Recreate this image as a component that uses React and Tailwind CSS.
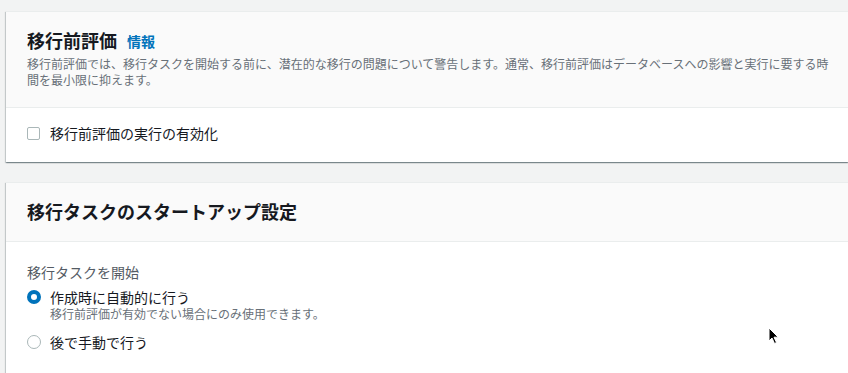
import React, { useState } from 'react';

const font = { fontFamily: '"Noto Sans CJK JP", "Noto Sans", sans-serif' };

const cardShadow =
    'shadow-[0_1px_1px_0_rgba(0,28,36,0.3),1px_1px_1px_0_rgba(0,28,36,0.15),-1px_1px_1px_0_rgba(0,28,36,0.15)]';

const Radio = ({ checked }) =>
    checked ? (
        <span className="w-[14px] h-[14px] rounded-full border-[4px] border-[#0073bb] bg-white shrink-0" />
    ) : (
        <span className="w-[14px] h-[14px] rounded-full border border-[#aab7b8] bg-white shrink-0" />
    );

const Cursor = () => (
    <svg className="absolute left-[768px] top-[327px]" width="12" height="18" viewBox="0 0 12 18">
        <path
            d="M1 1 L1 14 L4 11 L6.5 16.5 L8.5 15.5 L6 10.2 L10.2 10.2 Z"
            fill="#000"
            stroke="#fff"
            strokeWidth="1"
            strokeLinejoin="round"
        />
    </svg>
);

export default function App() {
    const [enabled, setEnabled] = useState(false);
    const [start, setStart] = useState('auto');

    return (
        <div className="relative h-[373px] overflow-hidden bg-[#f2f3f3] pl-[6px] pt-[11px]" style={font}>
            {/* 移行前評価 */}
            <div className={`bg-white border-t border-[#eaeded] ${cardShadow}`}>
                <div className="bg-[#fafafa] border-b border-[#eaeded] pl-[21px] pr-[8px] pt-[17px] pb-[19px]">
                    <div className="flex items-center h-[22px]">
                        <h2 className="text-[18px] font-bold leading-[22px] text-[#16191f]">移行前評価</h2>
                        <a className="ml-[10px] mt-[2px] text-[14px] font-bold leading-[22px] text-[#0073bb]">情報</a>
                    </div>
                    <p className="mt-[5px] text-[12px] leading-4 text-[#687078]">
                        移行前評価では、移行タスクを開始する前に、潜在的な移行の問題について警告します。通常、移行前評価はデータベースへの影響と実行に要する時間を最小限に抑えます。
                    </p>
                </div>
                <div className="pl-[21px] pt-[14px] pb-[18px]">
                    <label className="flex items-center gap-[10px] leading-[22px] cursor-pointer" onClick={() => setEnabled(!enabled)}>
                        <span
                            className={
                                enabled
                                    ? 'w-[13px] h-[13px] rounded-[2px] border border-[#0073bb] bg-[#0073bb]'
                                    : 'w-[13px] h-[13px] rounded-[2px] border border-[#aab7b8] bg-white'
                            }
                        />
                        <span className="text-[14px] text-[#16191f]">移行前評価の実行の有効化</span>
                    </label>
                </div>
            </div>

            {/* 移行タスクのスタートアップ設定 */}
            <div className={`mt-[20px] bg-white border-t border-[#eaeded] ${cardShadow}`}>
                <div className="bg-[#fafafa] border-b border-[#eaeded] pl-[21px] pt-[17px] pb-[19px]">
                    <h2 className="text-[18px] font-bold leading-[22px] text-[#16191f]">移行タスクのスタートアップ設定</h2>
                </div>
                <div className="pl-[21px] pt-[19px] pb-[40px]">
                    <div className="text-[14px] leading-[22px] text-[#545b64]">移行タスクを開始</div>
                    <div className="mt-[5px] flex flex-col">
                        <div className="flex cursor-pointer" onClick={() => setStart('auto')}>
                            <div className="h-[18px] flex items-center">
                                <Radio checked={start === 'auto'} />
                            </div>
                            <div className="ml-[9px]">
                                <div className="text-[14px] leading-[18px] text-[#16191f]">作成時に自動的に行う</div>
                                <div className="text-[12px] leading-[16px] text-[#687078]">
                                    移行前評価が有効でない場合にのみ使用できます。
                                </div>
                            </div>
                        </div>
                        <div className="mt-[11px] flex cursor-pointer" onClick={() => setStart('manual')}>
                            <div className="h-[18px] flex items-center">
                                <Radio checked={start === 'manual'} />
                            </div>
                            <div className="ml-[9px] text-[14px] leading-[18px] text-[#16191f]">後で手動で行う</div>
                        </div>
                    </div>
                </div>
            </div>

            <Cursor />
        </div>
    );
}
